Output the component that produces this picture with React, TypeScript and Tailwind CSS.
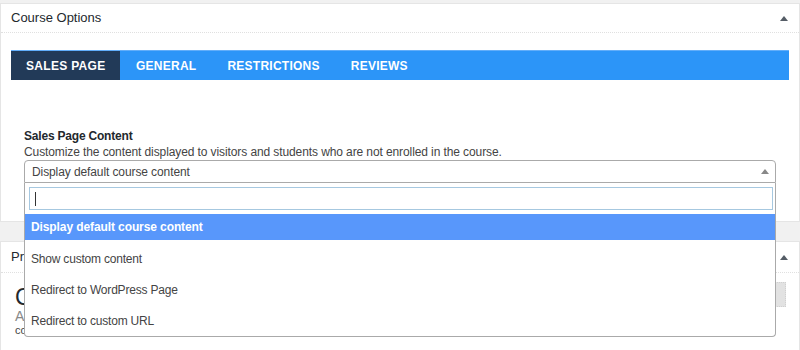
import React from "react";

const font = { fontFamily: '"Liberation Sans", Arial, sans-serif' };

function UpTri({ className }: { className?: string }) {
  return (
    <svg width="8" height="5" viewBox="0 0 8 5" className={className}>
      <polygon points="0,5 4,0 8,5" fill="currentColor" />
    </svg>
  );
}

export default function App() {
  return (
    <div
      className="relative w-[800px] h-[350px] overflow-hidden bg-[#f1f1f1] pt-[3px]"
      style={font}
    >
      {/* Panel 1 */}
      <div className="bg-white border border-[#e5e5e5] h-[219px]">
        <div className="h-[29px] flex items-center justify-between pl-[10px] pr-[11px] border-b border-dotted border-[#e0e0e0]">
          <span className="text-[13px] text-[#23282d]">Course Options</span>
          <UpTri className="text-[#555d66]" />
        </div>
        <div className="mt-[17px] ml-[10px] w-[778px] h-[30px] flex bg-[#2c95f8] border-t border-[#62aefa]">
          <div className="bg-[#223a58] flex items-center px-[15px] text-white text-[12px] font-bold tracking-[0.3px]">
            SALES PAGE
          </div>
          <div className="flex items-center px-[15.5px] text-white text-[12px] font-bold tracking-[0.25px]">
            GENERAL
          </div>
          <div className="flex items-center px-[15.5px] text-white text-[12px] font-bold tracking-[0.25px]">
            RESTRICTIONS
          </div>
          <div className="flex items-center px-[15.5px] text-white text-[12px] font-bold tracking-[0.25px]">
            REVIEWS
          </div>
        </div>
        <div className="relative mt-[48px] ml-[23px] w-[752px]">
          <div className="text-[12px] leading-[16px] font-bold text-[#23282d] tracking-[-0.2px]">
            Sales Page Content
          </div>
          <div className="text-[12px] leading-[16px] text-[#444] tracking-[-0.1px]">
            Customize the content displayed to visitors and students who are not enrolled in the course.
          </div>
          <div className="h-[23px] border border-[#aaa] rounded-t-[4px] flex items-center justify-between pl-[7px] pr-[6px] bg-white">
            <span className="text-[12px] text-[#444] tracking-[-0.1px]">Display default course content</span>
            <UpTri className="text-[#888]" />
          </div>
          {/* Dropdown */}
          <div className="absolute left-0 top-[55px] z-10 w-[752px] bg-white border border-t-0 border-[#aaa] rounded-b-[4px]">
            <div className="p-[4px] pr-[2px]">
              <div className="h-[23px] border border-[#a6c8e0] flex items-center px-[5px]">
                <div className="w-px h-[14px] bg-[#333]" />
              </div>
            </div>
            <div className="h-[26px] bg-[#5897fb] text-white text-[12px] font-bold flex items-center px-[6px] tracking-[-0.1px]">
              Display default course content
            </div>
            <div className="pt-[3px]">
              <div className="h-[31px] flex items-center px-[6px] text-[12px] text-[#444] tracking-[-0.2px]">
                Show custom content
              </div>
              <div className="h-[31px] flex items-center px-[6px] text-[12px] text-[#444] tracking-[-0.2px]">
                Redirect to WordPress Page
              </div>
              <div className="h-[31px] flex items-center px-[6px] text-[12px] text-[#444] tracking-[-0.2px]">
                Redirect to custom URL
              </div>
            </div>
          </div>
        </div>
      </div>

      {/* Panel 2 */}
      <div className="mt-[19px] bg-white border border-[#e5e5e5] h-[120px]">
        <div className="h-[31px] flex items-center justify-between pl-[10px] pr-[11px] border-b border-dotted border-[#e0e0e0]">
          <span className="text-[13px] text-[#23282d]">Pricing</span>
          <UpTri className="text-[#555d66]" />
        </div>
        <div className="flex justify-between pl-[14px] pr-[13px] pt-[12px]">
          <div>
            <div className="text-[23px] leading-[24px] text-[#23282d]">Course Price</div>
            <div className="text-[14px] leading-[14px] text-[#888]">Add a price</div>
            <div className="text-[11px] leading-[14px] text-[#444]">course</div>
          </div>
          <div className="w-[80px] h-[25px] -mt-[3px] bg-[#e2e2e2] border border-dotted border-[#d0d0d0]" />
        </div>
      </div>
    </div>
  );
}
